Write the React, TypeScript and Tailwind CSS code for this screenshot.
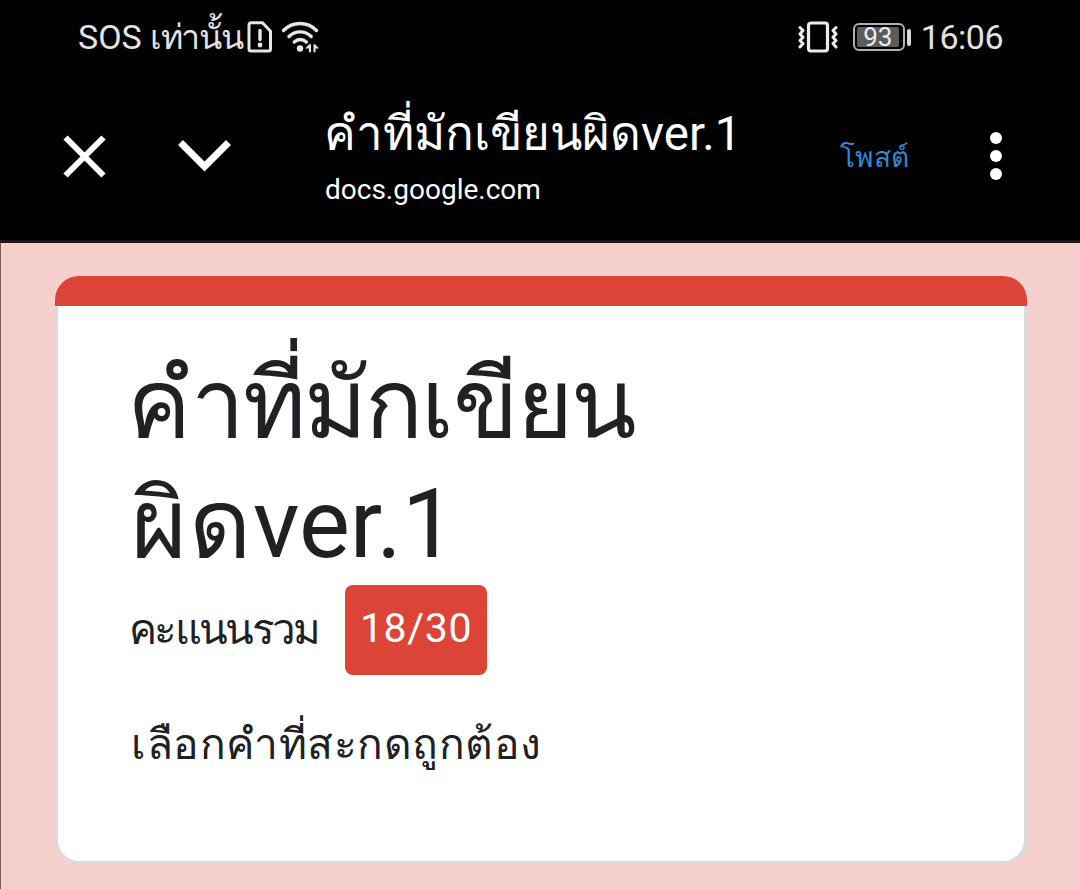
const SimAlertIcon = () => (
  <svg className="h-8 w-[26px]" viewBox="0 0 26 32" fill="none" stroke="#e6e6e6" strokeWidth="3" strokeLinejoin="round">
    <path d="M4 1.8h11.5l8 8.5V28a2 2 0 0 1-2 2H4a2 2 0 0 1-2-2V3.8a2 2 0 0 1 2-2z" />
    <path d="M13 9.5v9" strokeWidth="3.4" strokeLinecap="round" />
    <circle cx="13" cy="24" r="2.4" fill="#e6e6e6" stroke="none" />
  </svg>
)

const WifiIcon = () => (
  <svg className="h-8 w-10" viewBox="0 0 40 32" fill="none" stroke="#e6e6e6" strokeWidth="3.4" strokeLinecap="round">
    <path d="M2.5 9.5c9.5-9.3 23.5-9.3 33 0" />
    <path d="M8 15.5c6.2-6.2 16-6.2 22.2 0" />
    <path d="M13.3 21c3.5-3.4 8.5-3.4 12 0" />
    <circle cx="19" cy="27.5" r="3.2" fill="#e6e6e6" stroke="none" />
    <path d="M24.2 27.5l4-4.2h1.8v8h-2v-3.800zM32.500 31.300v-8h1.500l4 4.200h-3.500v3.800z" fill="#e6e6e6" stroke="none" />
  </svg>
)

const VibrateIcon = () => (
  <svg className="h-8 w-10" viewBox="0 0 40 32" fill="none" stroke="#ececec" strokeWidth="3.2" strokeLinejoin="round" strokeLinecap="round">
    <rect x="10.5" y="2" width="19" height="28" rx="2.5" />
    <path d="M2 6.500l3 3-3 3.500 3 3.300-3 3.200 3 3-3 3.500" strokeWidth="3" />
    <path d="M38 6.500l-3 3 3 3.500-3 3.300 3 3.200-3 3 3 3.500" strokeWidth="3" />
  </svg>
)

const StatusBar = () => (
  <div className="flex h-[76px] items-center pr-[77px] pl-[78px] text-[34px] leading-none text-[#e3e3e3]">
    <span className="-mt-0.5 whitespace-nowrap">
      SOS <span className="tracking-[-1.4px]">เท่านั้น</span>
    </span>
    <div className="-mt-[3px] ml-[5px] flex gap-2">
      <SimAlertIcon />
      <WifiIcon />
    </div>
    <div className="-mt-0.5 ml-auto flex items-center">
      <VibrateIcon />
      <div className="ml-[15px] flex h-7 w-[52px] rounded-md border-2 border-[#b0b0b0] p-0.5">
        <div className="flex w-[42px] items-center justify-center rounded-xs bg-[#5c5c5c] text-[26px] text-[#ededed]">93</div>
      </div>
      <div className="ml-0.5 h-[17px] w-1 rounded-full bg-[#d8d8d8]" />
      <span className="ml-2.5 tracking-[-0.5px]">16:06</span>
    </div>
  </div>
)

const Toolbar = () => (
  <div className="flex h-[164px] text-white">
    <svg className="mt-[59px] ml-[63px] h-[43px] w-[43px]" viewBox="0 0 43 43" fill="none" stroke="white" strokeWidth="6">
      <path d="M2.5 2.5l38 38M40.5 2.5l-38 38" />
    </svg>
    <svg className="mt-[63px] ml-[72px] h-[34px] w-[54px]" viewBox="0 0 54 34" fill="none" stroke="white" strokeWidth="7">
      <path d="M2.5 3.5l24 24 24-24" />
    </svg>
    <div className="ml-[93px] flex w-[515px] flex-col whitespace-nowrap">
      <h1 className="-ml-px mt-[30px] text-[47.5px] leading-[56px]">คำที่มักเขียนผิดver.1</h1>
      <span className="mt-[12px] text-[28px] leading-8">docs.google.com</span>
    </div>
    <button className="mt-[62px] h-10 w-[70px] text-left text-[28px] leading-10 tracking-[0.4px] text-[#2d8bd8]">โพสต์</button>
    <div className="mt-[56px] ml-[80px] flex flex-col gap-1.5">
      <i className="size-3 rounded-full bg-white" />
      <i className="size-3 rounded-full bg-white" />
      <i className="size-3 rounded-full bg-white" />
    </div>
  </div>
)

const FormCard = () => (
  <div className="mt-[33px] ml-[55px] w-[972px]">
    <div className="h-[30px] rounded-t-[24px] bg-[#db4437]" />
    <div className="h-[558px] rounded-b-[24px] border-x-3 border-b-3 border-[#dadbdd] bg-white pl-[73px] text-[#202124]">
      <h2 className="pt-[38px] text-[96px] leading-[120px]">
        <span className="-ml-1 tracking-[-1.9px]">คำที่มักเขียน</span>
        <br />
        <span className="tracking-[2px]">ผิด</span>ver.1
      </h2>
      <div className="mt-px flex h-[90px] items-center">
        <span className="-ml-0.5 w-[216px] text-[42px] leading-none tracking-[-2.7px]">คะแนนรวม</span>
        <span className="flex h-[90px] w-[142px] items-center justify-center rounded-lg bg-[#db4437] pb-0.5 text-[41px] tracking-[0.6px] text-white">
          18/30
        </span>
      </div>
      <p className="mt-[40px] text-[42.5px] leading-[60px] tracking-[0.5px]">เลือกคำที่สะกดถูกต้อง</p>
    </div>
  </div>
)

export default function App() {
  return (
    <div className="h-[889px] w-[1080px] overflow-hidden bg-black font-['Roboto','Noto_Sans',sans-serif]">
      <StatusBar />
      <Toolbar />
      <div className="flex h-[649px] border-t-3 border-t-[#211818] bg-[#f5d0cd]">
        <div className="w-px bg-[#7d5d5c]" />
        <div className="-ml-px">
          <FormCard />
        </div>
      </div>
    </div>
  )
}
